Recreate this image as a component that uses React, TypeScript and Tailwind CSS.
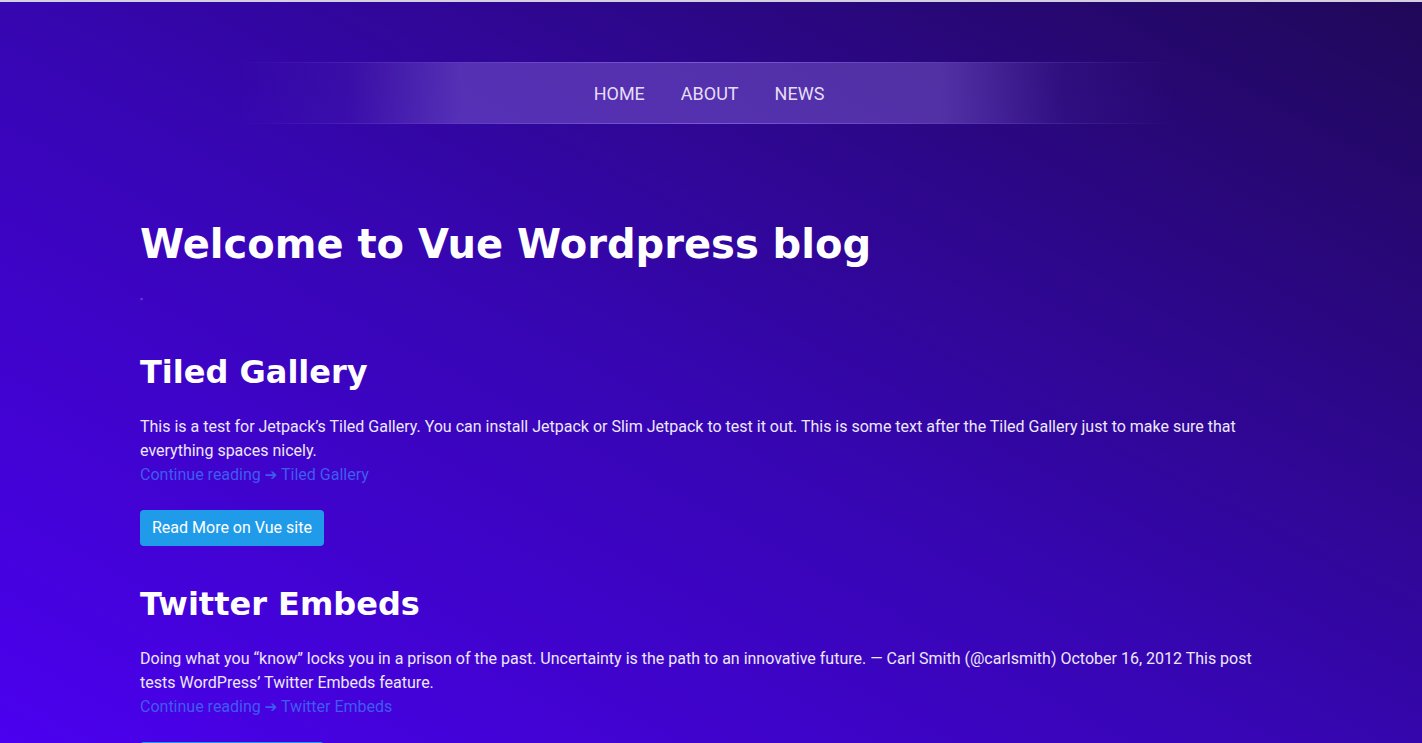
import React from "react";

const posts = [
  {
    title: "Tiled Gallery",
    text: "This is a test for Jetpack\u2019s Tiled Gallery. You can install Jetpack or Slim Jetpack to test it out. This is some text after the Tiled Gallery just to make sure that everything spaces nicely.",
  },
  {
    title: "Twitter Embeds",
    text: "Doing what you \u201cknow\u201d locks you in a prison of the past. Uncertainty is the path to an innovative future. \u2014 Carl Smith (@carlsmith) October 16, 2012 This post tests WordPress\u2019 Twitter Embeds feature.",
  },
];

export default function App() {
  return (
    <div
      className="min-h-screen w-full bg-[linear-gradient(to_top_right,#4c00f2_0%,#3606b0_50%,#200858_100%)] font-['Roboto','Liberation_Sans',sans-serif] text-white"
    >
      <div className="h-[2px] bg-[#d4d0e2]" />
      <div className="pt-[60px] flex justify-center">
        <div className="w-[940px] ml-[-10px]">
          <div className="h-px bg-[linear-gradient(to_right,rgba(140,110,230,0)_0%,rgba(140,110,230,0.6)_30%,rgba(140,110,230,0.8)_50%,rgba(140,110,230,0.6)_70%,rgba(140,110,230,0)_100%)]" />
          <div className="h-[60px] flex items-center justify-center gap-[36px] bg-[linear-gradient(to_right,rgba(130,100,210,0)_0%,rgba(130,100,210,0.08)_12%,rgba(130,100,210,0.45)_24%,rgba(130,100,210,0.45)_75%,rgba(130,100,210,0.08)_88%,rgba(130,100,210,0)_100%)] text-[18px] text-[#e6def6] pl-[6px]">
            <span>HOME</span>
            <span>ABOUT</span>
            <span>NEWS</span>
          </div>
          <div className="h-px bg-[linear-gradient(to_right,rgba(140,110,230,0)_0%,rgba(140,110,230,0.6)_30%,rgba(140,110,230,0.8)_50%,rgba(140,110,230,0.6)_70%,rgba(140,110,230,0)_100%)]" />
        </div>
      </div>
      <main className="pl-[140px] w-[1282px]">
        <h1 className="mt-[96px] font-['DejaVu_Sans',sans-serif] font-bold text-[40px] leading-[48px]">
          Welcome to Vue Wordpress blog
        </h1>
        <div className="mt-[22px] mb-[49px] h-[14px] text-[9px] leading-[24px] text-[#8a70d8]">&quot;</div>
        {posts.map((p) => (
          <article key={p.title}>
            <h2 className="mt-[39px] font-['DejaVu_Sans',sans-serif] font-bold text-[32px] leading-[38px]">
              {p.title}
            </h2>
            <p className="mt-[23px] text-[16px] leading-[24px] text-[#ece8fa] pt-px">{p.text}</p>
            <a className="block h-[24px] text-[16px] leading-[24px] text-[#3e5cf0]">
              Continue reading <span className="font-['DejaVu_Sans',sans-serif] text-[15px] leading-[0]">&#x2794;</span> {p.title}
            </a>
            <button className="block mt-[23px] h-[36px] px-[12px] rounded-[4px] bg-[#1f9bea] text-[16px] text-white">
              Read More on Vue site
            </button>
          </article>
        ))}
      </main>
    </div>
  );
}
